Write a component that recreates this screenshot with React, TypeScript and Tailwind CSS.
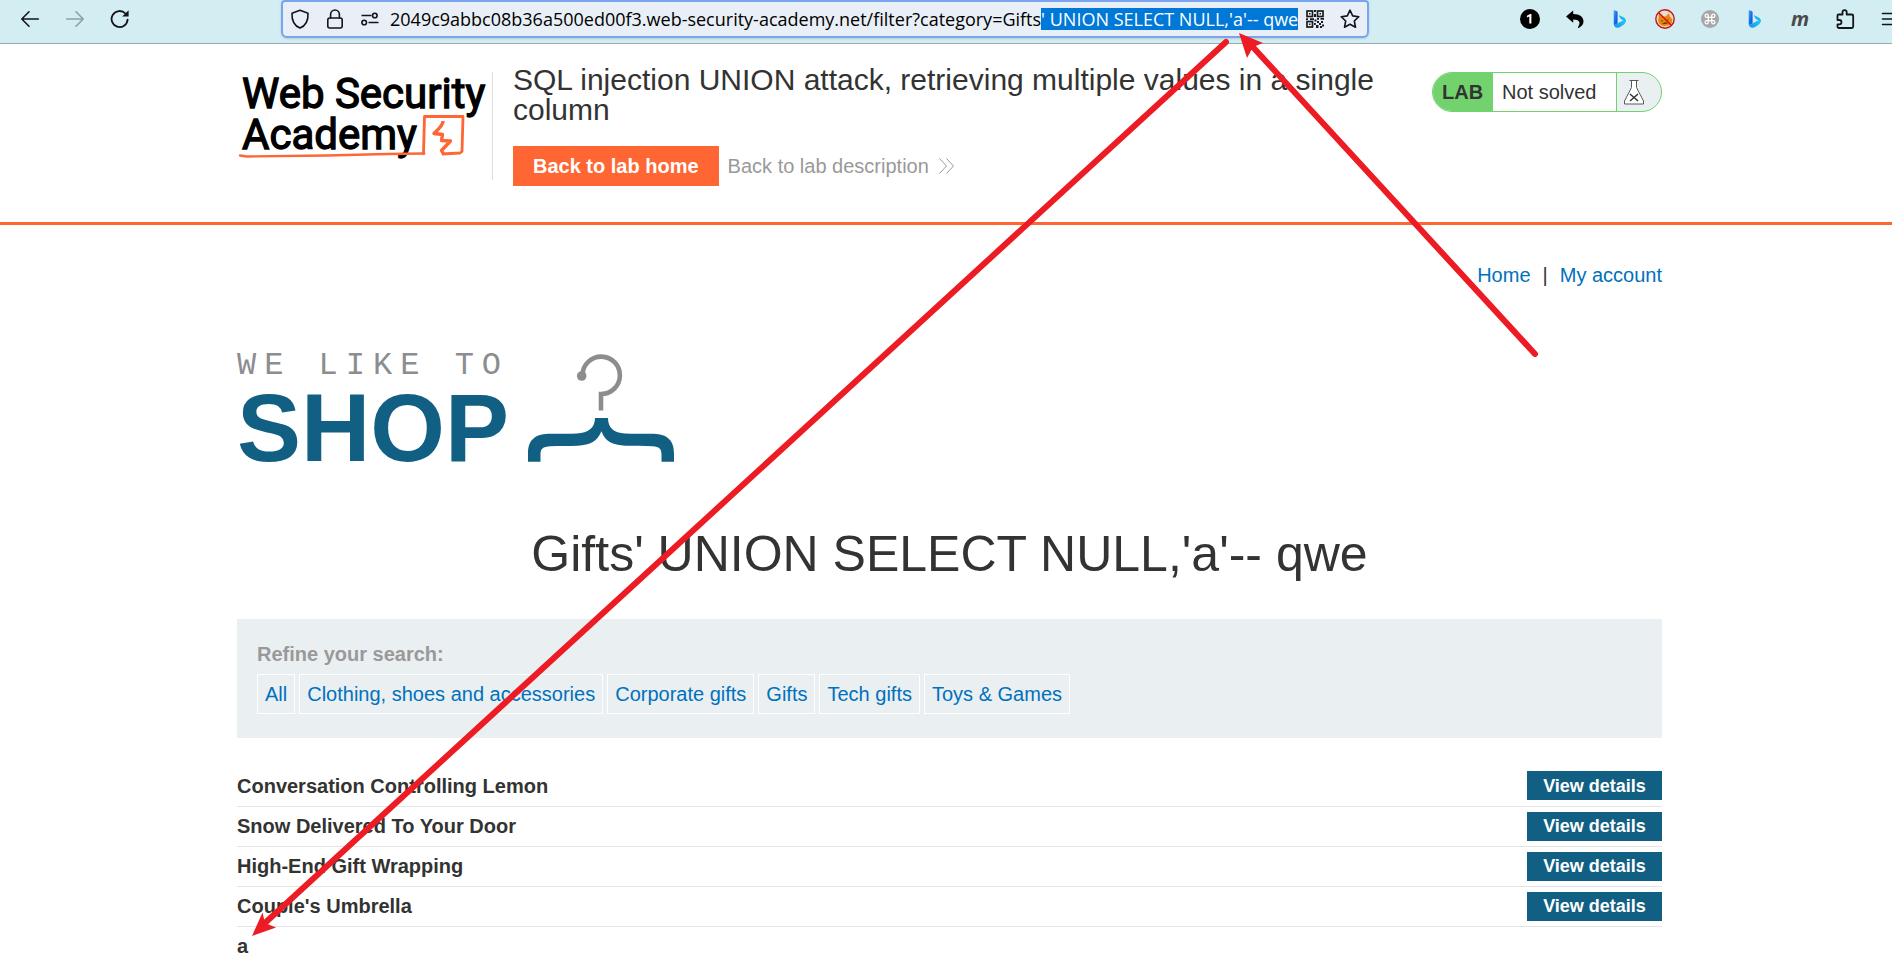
import { useEffect, useRef } from "react";

const ADDRESS = "2049c9abbc08b36a500ed00f3.web-security-academy.net/filter?category=Gifts";
const PAYLOAD = "' UNION SELECT NULL,'a'-- qwe";

const categories = [
  "All",
  "Clothing, shoes and accessories",
  "Corporate gifts",
  "Gifts",
  "Tech gifts",
  "Toys & Games",
];

const products = [
  { name: "Conversation Controlling Lemon", details: true },
  { name: "Snow Delivered To Your Door", details: true },
  { name: "High-End Gift Wrapping", details: true },
  { name: "Couple's Umbrella", details: true },
  { name: "a", details: false },
];

const line = {
  width: 20,
  height: 20,
  viewBox: "0 0 20 20",
  fill: "none",
  stroke: "currentColor",
  strokeWidth: 1.6,
  strokeLinecap: "round" as const,
  strokeLinejoin: "round" as const,
};

function BackIcon() {
  return (
    <svg {...line}>
      <path d="M18.3 10H2M9 2.8 1.8 10 9 17.2" />
    </svg>
  );
}

function ForwardIcon() {
  return (
    <svg {...line}>
      <path d="M1.7 10H18M11 2.8 18.2 10 11 17.2" />
    </svg>
  );
}

function ReloadIcon() {
  return (
    <svg {...line} strokeWidth={1.8}>
      <path d="M17.6 10.6A8 8 0 1 1 15.4 4.5" />
      <path d="M18.6 1.2v6.4h-6.4z" fill="currentColor" stroke="none" />
    </svg>
  );
}

function ShieldIcon() {
  return (
    <svg {...line}>
      <path d="M10 1.2 18 4.2c.3 6.4-1.6 12.2-8 14.9C3.6 16.4 1.7 10.6 2 4.2z" />
    </svg>
  );
}

function LockIcon() {
  return (
    <svg {...line}>
      <rect x="2.8" y="9" width="14.4" height="10" rx="2" />
      <path d="M5.6 9V5.4a4.4 4.4 0 0 1 8.8 0V9" />
    </svg>
  );
}

function PermissionsIcon() {
  return (
    <svg {...line} strokeLinecap="butt">
      <path d="M1.5 6.5h10M8.5 13.5h10" />
      <circle cx="14.8" cy="6.5" r="2.3" />
      <circle cx="4.2" cy="13.5" r="2.3" />
    </svg>
  );
}

function QrIcon() {
  return (
    <svg width="20" height="20" viewBox="0 0 20 20" fill="none" stroke="#1b1b1f" strokeWidth="1.7">
      <rect x="2" y="2" width="5.5" height="5.5" />
      <rect x="12.5" y="2" width="5.5" height="5.5" />
      <rect x="2" y="12.5" width="5.5" height="5.5" />
      <path
        d="M4 4h1.5v1.5H4zM14.5 4H16v1.5h-1.5zM4 14.5h1.5V16H4zM9 1h2v2H9zM9 5h2v3H9zM1 9.2h2v1.8H1zM5 9.2h4V11H5zM9.5 10.5h2v2h-2zM12 9h2v1.8h-2zM15.5 9h3.5v1.8h-3.5zM12 12h2v2h-2zM16 12h2v2h-2zM14 14h2v2h-2zM17 15.5h2v2h-2zM11 16h2.5v3H11zM15 17h2v2h-2zM9 14h1.8v2H9z"
        fill="#1b1b1f"
        stroke="none"
      />
    </svg>
  );
}

function StarIcon() {
  return (
    <svg {...line}>
      <path d="m10 1.2 2.7 5.7 6.1.8-4.5 4.3 1.2 6.2-5.500-3-5.500 3L5.700 12 1.200 7.700l6.100-.8z" />
    </svg>
  );
}

function OneBadge() {
  return (
    <svg width="20" height="20" viewBox="0 0 20 20">
      <circle cx="10" cy="10" r="10" fill="#000" />
      <path d="M6.9 6.8 10.2 5h1.2v9.6H9.3V7.5l-2.4 1z" fill="#fff" />
    </svg>
  );
}

function ReplyIcon() {
  return (
    <svg width="20" height="20" viewBox="0 0 20 20">
      <path d="M1 7.5 8.2 1.5V5c6.8.1 10.3 3 10.3 7.6 0 3-2 4.7-4.4 6.2-.8.3-1.6-.2-1-.9 2.9-4.4 1.3-7.4-4.9-7.4v3.300z" fill="#000" />
    </svg>
  );
}

function BingIcon({ id }: { id: string }) {
  return (
    <svg width="20" height="20" viewBox="0 0 20 20">
      <defs>
        <linearGradient id={id} x1="0" y1="0" x2="1" y2="1">
          <stop offset="0" stopColor="#4fa8f8" />
          <stop offset="0.55" stopColor="#1467e8" />
          <stop offset="1" stopColor="#1b4fe0" />
        </linearGradient>
        <linearGradient id={id + "-tail"} x1="0" y1="1" x2="1" y2="0">
          <stop offset="0" stopColor="#1a8df0" />
          <stop offset="1" stopColor="#25d3f5" />
        </linearGradient>
      </defs>
      <path d="M3.7 1 6.6 2c.7.3 1 .8 1 1.5v10.7L4.8 17c-.7-.5-1.1-1.3-1.1-2.2z" fill={`url(#${id})`} />
      <path d="M3.8 15.5c.5 1.5 1.3 3.3 3.7 3.3 1.7 0 3.3-1.2 5.8-2.7 2.3-1.5 3-3.9 2.1-5.8L7.6 14.2z" fill={`url(#${id}-tail)`} />
      <path d="M9 6.9c-.2-.5.1-.7.6-.5l3.8 1.9c1.9 1 2.7 2.6 2.3 4.6-.7-.9-1.6-1.3-3-1.8l-1.6-.8z" fill="#19b5f3" />
    </svg>
  );
}

function BlockedFoxIcon() {
  return (
    <svg width="20" height="20" viewBox="0 0 20 20">
      <circle cx="10" cy="10" r="9" fill="#e4ded0" />
      <path d="M3.5 8.5 3.8 5l3.5 2.2 3.2.2L14 4.2l.8 3 2.6 3.3-.6 3.7-3.2 2.2-5 .8-4-2-1.4-3z" fill="#e8860c" />
      <path d="m6 11.5 2 .8M13.5 10.5l-2 1.2M7.5 15c2-1.5 4-1.3 5-.7" stroke="#7c4307" strokeWidth="1" />
      <circle cx="10" cy="10" r="9.2" fill="none" stroke="#d00f14" strokeWidth="1.4" />
      <path d="m3.5 3.5 13 13" stroke="#d00f14" strokeWidth="1.4" />
    </svg>
  );
}

function CommandIcon() {
  return (
    <svg width="20" height="20" viewBox="0 0 20 20">
      <circle cx="10" cy="10" r="9" fill="#a7a7a7" />
      <path
        d="M8.3 8.3H6.7a1.6 1.6 0 1 1 1.6-1.6v6.6a1.6 1.6 0 1 1-1.6-1.6h6.6a1.6 1.6 0 1 1-1.6 1.6V6.7a1.6 1.6 0 1 1 1.6 1.6z"
        fill="none"
        stroke="#fff"
        strokeWidth="1.3"
      />
    </svg>
  );
}

function PuzzleIcon() {
  return (
    <svg {...line} strokeWidth={1.8}>
      <path d="M2.5 6.5a1 1 0 0 1 1-1h4V3.3a2.1 2.1 0 0 1 4.2 0v2.2h5a1.5 1.5 0 0 1 1.5 1.5v10.5a1.5 1.5 0 0 1-1.5 1.5H4a1.5 1.5 0 0 1-1.5-1.5v-2.2h1.8a2.1 2.1 0 0 0 0-4.3H2.5z" />
    </svg>
  );
}

function MenuIcon() {
  return (
    <svg {...line}>
      <path d="M2.5 4.5h16M2.5 10h16M2.5 15.5h16" />
    </svg>
  );
}

function AcademyLogo() {
  return (
    <svg width="255" height="96" viewBox="0 0 255 96" role="img" aria-label="Web Security Academy">
      <g className="font-['Roboto',sans-serif]" fontSize="42" fill="#000" stroke="#000" strokeWidth="1.3">
        <text x="5" y="36">Web Security</text>
        <text x="5" y="77">Academy</text>
      </g>
      <g fill="none" stroke="#ff6633" strokeLinejoin="round">
        <path d="M3 83.5 10 84.5 90 83.5 150 82 187 81.5" strokeWidth="2.4" strokeLinecap="round" />
        <path d="M187.5 82.5 186.5 81 187.5 44.5 226 44.5 225 79.5 223 81 205 82" strokeWidth="2.8" />
        <path d="M206 49c0 5-5 8-9 12.5l8.5 1-1 6 9 .5-9 9.5 2 3.5" strokeWidth="3.4" />
      </g>
    </svg>
  );
}

function ShopLogo() {
  return (
    <div className="flex h-[120px] items-start gap-5">
      <div className="flex w-[270px] flex-col whitespace-nowrap">
        <span className="font-['Liberation_Mono',monospace] text-[32px] leading-[32px] tracking-[8px] text-[#8c8d8f]">WE LIKE TO</span>
        <span className="font-['Liberation_Sans',Arial,sans-serif] text-[96px] leading-[92px] font-bold text-[#125f84]">SHOP</span>
      </div>
      <svg width="148" height="112" viewBox="0 -2 148 112" aria-hidden="true">
        <path d="M55.5 22.5a18.7 18.7 0 1 1 18.5 19.5v16.5" fill="none" stroke="#8c8d8f" strokeWidth="4.6" />
        <circle cx="54.7" cy="24" r="4.8" fill="#8c8d8f" />
        <path
          d="M68 66h13c0 10 6 15 17 15.5 8 .3 17 0 26 .3 15 0 23 5 23 20v8h-12.5v-7c0-6-2-8.3-9-8.6-9-.3-18 0-27-.4-13-.5-21-5-24-14.5-4 9.5-11 14-24 14.5-9 .4-18 .1-27 .4-8 .3-10 2.6-10 8.6v7H1v-8c0-15 8-20 23-20 9-.3 18 0 26-.3 11-.5 18-5.5 18-15.5z"
          fill="#125f84"
        />
      </svg>
    </div>
  );
}

function FlaskIcon() {
  return (
    <svg width="22" height="28" viewBox="0 0 22 28" fill="none" stroke="#555a5c" strokeWidth="1">
      <path d="M6.5 2.5h9M8.5 2.5v7L1.5 23v3h19v-3l-7-13.5v-7" fill="#fff" />
      <path d="m7 16 8 7M15 16l-8 7" stroke="#333332" strokeWidth="1.5" />
    </svg>
  );
}

function Annotations() {
  return (
    <svg className="pointer-events-none absolute top-0 left-0" width="1892" height="964" viewBox="0 0 1892 964" aria-hidden="true">
      <g stroke="#ed1c24" strokeWidth="6" strokeLinecap="round" fill="#ed1c24">
        <path d="M1226 42 266 922" />
        <path d="M252 936 262.5 912.5 265 923 276 927.5z" stroke="none" />
        <path d="M1535 354 1251 45" />
        <path d="M1239 33 1263 43 1253 47 1247 58z" stroke="none" />
      </g>
    </svg>
  );
}

const toolButton = "grid size-5 shrink-0 place-items-center";

export default function App() {
  const address = useRef<HTMLInputElement>(null);

  useEffect(() => {
    const field = address.current;
    if (!field) return;
    field.focus();
    field.setSelectionRange(ADDRESS.length, ADDRESS.length + PAYLOAD.length);
  }, []);

  return (
    <div className="relative flex h-screen flex-col overflow-hidden bg-white font-['Liberation_Sans',Arial,sans-serif] text-xl text-[#333332]">
      <header className="flex h-11 shrink-0 items-start border-b border-[#9aa9ad] bg-[#d2eef2] text-[#15141a]">
        <div className="flex h-[38px] w-[281px] shrink-0 items-center gap-[25px] pl-5">
          <button className={toolButton} aria-label="Back"><BackIcon /></button>
          <button className={`${toolButton} text-[#8aa0a5]`} aria-label="Forward" disabled><ForwardIcon /></button>
          <button className={toolButton} aria-label="Reload"><ReloadIcon /></button>
        </div>
        <div className="flex h-[38px] min-w-0 flex-1 items-center rounded-b-md rounded-t-sm border-2 border-[#78a5ee] bg-[#e9eff7] px-[7px] shadow">
          <div className="flex shrink-0 gap-[15px]">
            <button className={toolButton} aria-label="Tracking protection"><ShieldIcon /></button>
            <button className={toolButton} aria-label="Site security"><LockIcon /></button>
            <button className={toolButton} aria-label="Permissions"><PermissionsIcon /></button>
          </div>
          <input
            ref={address}
            aria-label="Address"
            spellCheck={false}
            defaultValue={ADDRESS + PAYLOAD}
            className="ml-[10px] min-w-0 flex-1 bg-transparent font-['Open_Sans','Noto_Sans',sans-serif] text-[18px] leading-[22px] text-black caret-transparent outline-none selection:bg-[#0078d7] selection:text-white"
          />
          <div className="ml-1 flex shrink-0 gap-[15px]">
            <button className={toolButton} aria-label="QR code"><QrIcon /></button>
            <button className={toolButton} aria-label="Bookmark"><StarIcon /></button>
          </div>
        </div>
        <div className="flex h-[38px] w-[523px] shrink-0 items-center gap-[25px] overflow-hidden pl-[151px]">
          <button className={toolButton} aria-label="Extension with one notice"><OneBadge /></button>
          <button className={toolButton} aria-label="Undo"><ReplyIcon /></button>
          <button className={toolButton} aria-label="Bing"><BingIcon id="bing-a" /></button>
          <button className={toolButton} aria-label="Proxy off"><BlockedFoxIcon /></button>
          <button className={toolButton} aria-label="Shortcuts"><CommandIcon /></button>
          <button className={toolButton} aria-label="Bing chat"><BingIcon id="bing-b" /></button>
          <button className={`${toolButton} font-['Open_Sans',sans-serif] text-xl leading-4 font-bold text-[#4a4a4a] italic`}>m</button>
          <button className={toolButton} aria-label="Extensions"><PuzzleIcon /></button>
          <button className={toolButton} aria-label="Menu"><MenuIcon /></button>
        </div>
      </header>

      <section className="flex h-[181px] shrink-0 items-start border-b-3 border-[#ff6633] pt-7 pr-[230px] pl-[237px]">
        <a href="#academy" className="flex h-[108px] w-64 shrink-0 border-r border-[#dddddd]">
          <AcademyLogo />
        </a>
        <div className="-mt-[7px] ml-5 min-w-0 flex-1 pr-14">
          <h2 className="text-3xl leading-[30px]">
            SQL injection UNION attack, retrieving multiple values in a single column
          </h2>
          <div className="mt-[21px] flex items-center gap-[9px]">
            <a href="#lab" className="flex h-10 items-center bg-[#ff6633] px-5 font-bold text-white">Back to lab home</a>
            <a href="#description" className="flex items-center gap-[10px] text-[#999999]">
              Back to lab description
              <svg width="15" height="16" viewBox="0 0 15 16" fill="none" stroke="#999" strokeWidth="1">
                <path d="m.5.5 7 7.5-7 7.5M7.5.5l7 7.5-7 7.5" />
              </svg>
            </a>
          </div>
        </div>
        <div className="flex h-10 w-[230px] shrink-0 overflow-hidden rounded-full border border-[#72d36e] bg-[#eaeff2]">
          <span className="flex w-[60px] items-center bg-[#72d36e] pl-[9px] font-bold">LAB</span>
          <span className="flex flex-1 items-center border-r border-[#72d36e] bg-white pl-[9px]">Not solved</span>
          <span className="flex w-11 items-center pl-[6px]"><FlaskIcon /></span>
        </div>
      </section>

      <main className="min-h-0 flex-1 overflow-hidden pr-[230px] pl-[237px]">
        <nav className="mt-9 flex h-7 items-center justify-end gap-3">
          <a href="#home" className="text-[#0071bc]">Home</a>
          <span>|</span>
          <a href="#account" className="text-[#0071bc]">My account</a>
        </nav>

        <div className="mt-[61px]">
          <ShopLogo />
        </div>

        <h1 className="mt-[54px] text-center text-[50px] leading-[60px]">Gifts{PAYLOAD}</h1>

        <section className="mt-[35px] h-[119px] bg-[#eaeff2] px-5 pt-5">
          <p className="leading-[30px] font-bold text-[#999999]">Refine your search:</p>
          <div className="mt-[5px] flex gap-1">
            {categories.map((name) => (
              <a key={name} href="#filter" className="flex h-10 items-center border border-white px-[7px] text-[#0071bc]">
                {name}
              </a>
            ))}
          </div>
        </section>

        <table className="mt-7 w-full border-collapse">
          <tbody>
            {products.map((product) => (
              <tr key={product.name} className="h-10 border-b border-[#e4e4e4]">
                <th scope="row" className="p-0 text-left font-bold">{product.name}</th>
                <td className="p-0">
                  {product.details && (
                    <a href="#product" className="ml-auto flex h-[29px] w-[135px] items-center justify-center bg-[#125f84] text-lg leading-none font-bold text-white">
                      View details
                    </a>
                  )}
                </td>
              </tr>
            ))}
          </tbody>
        </table>
      </main>

      <Annotations />
    </div>
  );
}
